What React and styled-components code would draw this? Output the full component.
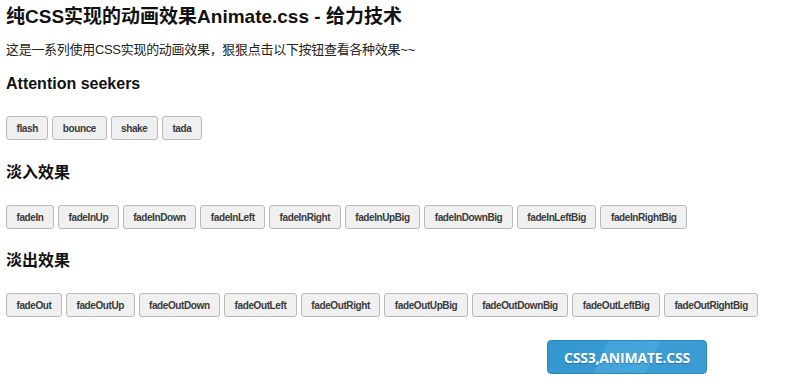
import React from "react";
import styled, { createGlobalStyle } from "styled-components";

const Global = createGlobalStyle`
  html, body { margin: 0; padding: 0; background: #fff; }
  body { font-family: "Liberation Sans", Arial, "Noto Sans CJK SC", sans-serif; color: #111; }
`;

const Page = styled.div`
  padding: 5px 6px 0 6px;
  display: flex;
  flex-direction: column;
`;

const Title = styled.h1`
  margin: 0;
  font-size: 19px;
  line-height: 24px;
  font-weight: bold;
  color: #111;
  font-family: "Liberation Sans", Arial, "Noto Sans CJK SC", sans-serif;
`;

const Lead = styled.p`
  margin: 11px 0 0 0;
  font-size: 13px;
  line-height: 20px;
  letter-spacing: -0.3px;
  color: #222;
  font-family: "Liberation Sans", Arial, "Noto Sans CJK SC", sans-serif;
`;

const Heading = styled.h3`
  margin: ${(p) => p.$top}px 0 0 0;
  font-size: 16px;
  line-height: 22px;
  font-weight: bold;
  color: #111;
  font-family: "Liberation Sans", Arial, "Noto Sans CJK SC", sans-serif;
`;

const Row = styled.div`
  margin-top: 21px;
  display: flex;
  flex-wrap: wrap;
  gap: 4px;
`;

const Btn = styled.button`
  height: 24px;
  padding: 0 9.5px;
  border: 1px solid #b9b9b9;
  border-radius: 3px;
  background: #f0f0f0;
  color: #3a3a3a;
  font-family: "Liberation Sans", Arial, sans-serif;
  font-size: 10px;
  font-weight: bold;
  letter-spacing: -0.4px;
  cursor: pointer;
  box-sizing: border-box;
`;

const Footer = styled.div`
  margin-top: 23px;
  padding-left: 541px;
  display: flex;
`;

const BlueBtn = styled.a`
  width: 160px;
  height: 34px;
  box-sizing: border-box;
  display: flex;
  align-items: center;
  justify-content: center;
  border: 1px solid #2b88bf;
  border-radius: 4px;
  background: linear-gradient(
    115deg,
    #3597cf 0%,
    #3799d1 35%,
    #44a4da 35%,
    #45a6db 65%,
    #3b9cd3 65%,
    #3b9cd3 100%
  );
  color: #fff;
  font-family: "Open Sans", "Liberation Sans", Arial, sans-serif;
  font-size: 14px;
  font-weight: bold;
  text-shadow: 0 1px 1px rgba(0, 0, 0, 0.25);
  text-decoration: none;
  letter-spacing: -0.2px;
`;

const groups = [
  { title: "Attention seekers", top: 13, items: ["flash", "bounce", "shake", "tada"] },
  {
    title: "淡入效果",
    top: 22,
    items: ["fadeIn", "fadeInUp", "fadeInDown", "fadeInLeft", "fadeInRight", "fadeInUpBig", "fadeInDownBig", "fadeInLeftBig", "fadeInRightBig"],
  },
  {
    title: "淡出效果",
    top: 21,
    items: ["fadeOut", "fadeOutUp", "fadeOutDown", "fadeOutLeft", "fadeOutRight", "fadeOutUpBig", "fadeOutDownBig", "fadeOutLeftBig", "fadeOutRightBig"],
  },
];

export default function App() {
  return (
    <>
      <Global />
      <Page>
        <Title>纯CSS实现的动画效果Animate.css - 给力技术</Title>
        <Lead>这是一系列使用CSS实现的动画效果，狠狠点击以下按钮查看各种效果~~</Lead>
        {groups.map((g) => (
          <React.Fragment key={g.title}>
            <Heading $top={g.top}>{g.title}</Heading>
            <Row>
              {g.items.map((it) => (
                <Btn key={it}>{it}</Btn>
              ))}
            </Row>
          </React.Fragment>
        ))}
        <Footer>
          <BlueBtn href="#">CSS3,ANIMATE.CSS</BlueBtn>
        </Footer>
      </Page>
    </>
  );
}
